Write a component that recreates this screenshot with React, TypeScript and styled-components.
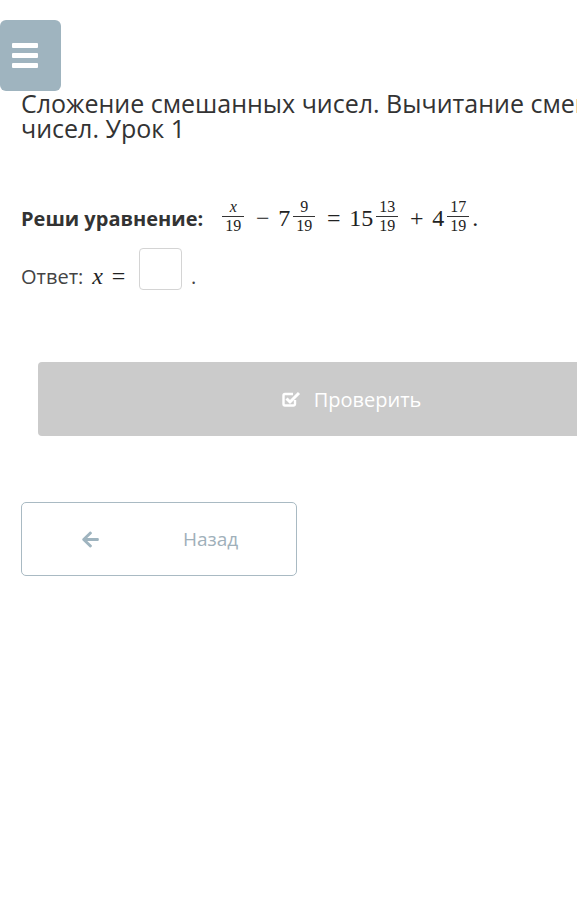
import styled, { createGlobalStyle } from 'styled-components';
import { FaArrowLeft } from 'react-icons/fa';

const GlobalStyle = createGlobalStyle`
    body {
        margin: 0;
        background: #fff;
        overflow: hidden;
        font-family: "Open Sans", "Liberation Sans", sans-serif;
        color: #333;
    }
`;

const Page = styled.div`
    width: 760px;
    padding-top: 20px;
`;

const MenuButton = styled.button`
    display: flex;
    flex-direction: column;
    justify-content: center;
    gap: 5px;
    width: 61px;
    height: 71px;
    padding: 0 0 0 12px;
    border: none;
    border-radius: 6px;
    background: #9fb4bf;

    span {
        display: block;
        width: 26px;
        height: 5px;
        border-radius: 1px;
        background: #fff;
    }
`;

const Content = styled.div`
    padding-left: 21px;
`;

const Title = styled.h1`
    width: 700px;
    margin: 0;
    font-size: 25px;
    line-height: 25px;
    font-weight: 400;
    color: #333;
`;

const Task = styled.div`
    margin-top: 62px;
    font-size: 20px;
    line-height: 30px;
    display: flex;
    align-items: baseline;
`;

const Label = styled.span`
    font-weight: 700;
    color: #333;
    margin-right: 16px;
`;

const Math = styled.span`
    font-family: "Liberation Serif", "DejaVu Serif", serif;
    font-size: 24px;
    display: inline-flex;
    align-items: baseline;
    color: #222;
`;

const Frac = styled.span`
    display: inline-flex;
    flex-direction: column;
    align-items: center;
    font-size: 16px;
    line-height: 14px;
    margin: 0 3px;
    position: relative;
    top: -14px;
`;

const Num = styled.span<{ $italic?: boolean }>`
    padding: 0 3px 2px;
    font-style: ${p => (p.$italic ? 'italic' : 'normal')};
`;

const Den = styled.span`
    padding: 2px 3px 0;
    border-top: 1px solid #333;
    align-self: stretch;
    text-align: center;
    margin-bottom: -14px;
`;

const Op = styled.span`
    display: inline-block;
    min-width: 19px;
    text-align: center;
    margin: 0 6px;
`;

const Var = styled.span`
    font-style: italic;
`;

const Answer = styled.div`
    margin-top: 14px;
    display: flex;
    align-items: flex-end;
    font-size: 20px;
    color: #444;
`;

const AnswerLabel = styled.span`
    margin-right: 9px;
`;

const AnswerInput = styled.span`
    display: inline-block;
    width: 41px;
    height: 40px;
    border: 1px solid #d4d4d4;
    border-radius: 4px;
    margin: 0 9px 0 5px;
`;

const CheckButton = styled.button`
    display: flex;
    align-items: center;
    justify-content: center;
    gap: 13px;
    width: 626px;
    height: 74px;
    margin: 72px 0 0 17px;
    border: none;
    border-radius: 4px;
    background: #cbcbcb;
    color: #fff;
    font-family: "Open Sans", "Liberation Sans", sans-serif;
    font-size: 20px;

    svg {
        width: 20px;
        height: 20px;
    }
`;

const BackButton = styled.button`
    display: flex;
    align-items: center;
    width: 276px;
    height: 74px;
    margin-top: 66px;
    padding: 0 0 0 59px;
    border: 1px solid #a9bac3;
    border-radius: 5px;
    background: #fff;
    color: #9fb0ba;
    font-family: "Open Sans", "Liberation Sans", sans-serif;
    font-size: 19px;

    svg {
        width: 19px;
        height: 19px;
        color: #9fb4bf;
        margin-right: 83px;
    }
`;

const CheckSquareIcon = () => (
    <svg viewBox="0 0 20 20" fill="none" stroke="currentColor">
        <path d="M14 11 V15 a1.5 1.5 0 0 1 -1.5 1.5 H4 a1.5 1.5 0 0 1 -1.5 -1.5 V6.5 A1.5 1.5 0 0 1 4 5 H12" strokeWidth="2.4" />
        <path d="M5.5 9.5 L9 13 L18 4" strokeWidth="3" strokeLinejoin="miter" />
    </svg>
);

export default function App() {
    return (
        <Page>
            <GlobalStyle />
            <MenuButton aria-label="menu">
                <span />
                <span />
                <span />
            </MenuButton>
            <Content>
                <Title>Сложение смешанных чисел. Вычитание смешанных чисел. Урок 1</Title>
                <Task>
                    <Label>Реши уравнение:</Label>
                    <Math>
                        <Frac>
                            <Num $italic>x</Num>
                            <Den>19</Den>
                        </Frac>
                        <Op>−</Op>
                        7
                        <Frac>
                            <Num>9</Num>
                            <Den>19</Den>
                        </Frac>
                        <Op>=</Op>
                        15
                        <Frac>
                            <Num>13</Num>
                            <Den>19</Den>
                        </Frac>
                        <Op>+</Op>
                        4
                        <Frac>
                            <Num>17</Num>
                            <Den>19</Den>
                        </Frac>
                        .
                    </Math>
                </Task>
                <Answer>
                    <AnswerLabel>Ответ:</AnswerLabel>
                    <Math>
                        <Var>x</Var>
                        <Op>=</Op>
                    </Math>
                    <AnswerInput />
                    .
                </Answer>
                <CheckButton>
                    <CheckSquareIcon />
                    Проверить
                </CheckButton>
                <BackButton>
                    <FaArrowLeft />
                    Назад
                </BackButton>
            </Content>
        </Page>
    );
}
